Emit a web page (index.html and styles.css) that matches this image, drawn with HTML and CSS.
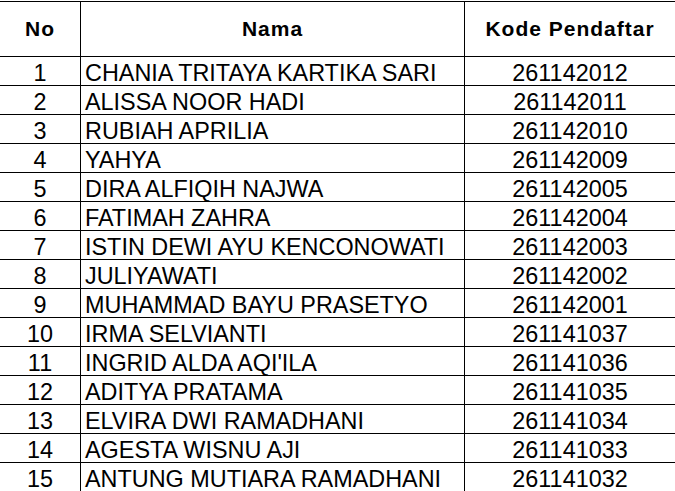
FILE: index.html
```html
<!DOCTYPE html>
<html lang="id">
<head>
<meta charset="utf-8">
<title>Daftar Pendaftar</title>
<link rel="stylesheet" href="styles.css">
</head>
<body>
<div class="sheet">
  <div class="cell head">No</div>
  <div class="cell head">Nama</div>
  <div class="cell head last">Kode Pendaftar</div>

  <div class="cell num">1</div><div class="cell name">CHANIA TRITAYA KARTIKA SARI</div><div class="cell code last">261142012</div>
  <div class="cell num">2</div><div class="cell name">ALISSA NOOR HADI</div><div class="cell code last">261142011</div>
  <div class="cell num">3</div><div class="cell name">RUBIAH APRILIA</div><div class="cell code last">261142010</div>
  <div class="cell num">4</div><div class="cell name">YAHYA</div><div class="cell code last">261142009</div>
  <div class="cell num">5</div><div class="cell name">DIRA ALFIQIH NAJWA</div><div class="cell code last">261142005</div>
  <div class="cell num">6</div><div class="cell name">FATIMAH ZAHRA</div><div class="cell code last">261142004</div>
  <div class="cell num">7</div><div class="cell name">ISTIN DEWI AYU KENCONOWATI</div><div class="cell code last">261142003</div>
  <div class="cell num">8</div><div class="cell name">JULIYAWATI</div><div class="cell code last">261142002</div>
  <div class="cell num">9</div><div class="cell name">MUHAMMAD BAYU PRASETYO</div><div class="cell code last">261142001</div>
  <div class="cell num">10</div><div class="cell name">IRMA SELVIANTI</div><div class="cell code last">261141037</div>
  <div class="cell num">11</div><div class="cell name">INGRID ALDA AQI'ILA</div><div class="cell code last">261141036</div>
  <div class="cell num">12</div><div class="cell name">ADITYA PRATAMA</div><div class="cell code last">261141035</div>
  <div class="cell num">13</div><div class="cell name">ELVIRA DWI RAMADHANI</div><div class="cell code last">261141034</div>
  <div class="cell num">14</div><div class="cell name">AGESTA WISNU AJI</div><div class="cell code last">261141033</div>
  <div class="cell num">15</div><div class="cell name">ANTUNG MUTIARA RAMADHANI</div><div class="cell code last">261141032</div>
</div>
</body>
</html>
```

FILE: styles.css
```css
html, body {
  margin: 0;
  padding: 0;
  background: #fff;
}

body {
  font-family: "Liberation Sans", Arial, sans-serif;
  color: #000;
  overflow: hidden;
}

.sheet {
  display: grid;
  grid-template-columns: 81px 384px 210px;
  padding-top: 1px;
  width: 675px;
}

.cell {
  box-sizing: border-box;
  border-right: 1px solid #000;
  border-bottom: 1px solid #000;
  height: 29px;
  display: flex;
  align-items: flex-end;
  justify-content: center;
  font-size: 23.4px;
  line-height: 24px;
  white-space: nowrap;
  overflow: hidden;
}

.cell.last {
  border-right: none;
}

.head {
  height: 56px;
  border-top: 1px solid #000;
  align-items: center;
  font-weight: bold;
  font-size: 21px;
  letter-spacing: 1px;
  line-height: 24px;
}

.name {
  justify-content: flex-start;
  padding-left: 4px;
}
```
